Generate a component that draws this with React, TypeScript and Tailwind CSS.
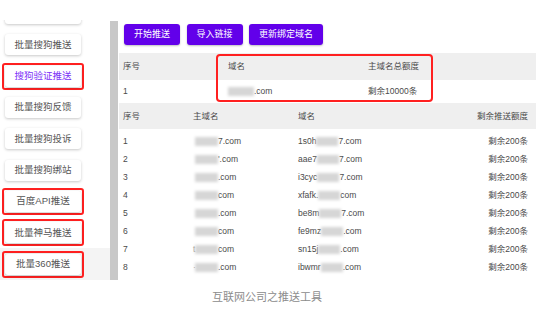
import React from "react"

const font = { fontFamily: '"Liberation Sans", "Noto Sans CJK SC", sans-serif' }

const sideItems = [
  { label: "", partial: true },
  { label: "批量搜狗推送" },
  { label: "搜狗验证推送", marked: true, purple: true },
  { label: "批量搜狗反馈" },
  { label: "批量搜狗投诉" },
  { label: "批量搜狗绑站" },
  { label: "百度API推送", marked: true },
  { label: "批量神马推送", marked: true },
  { label: "批量360推送", marked: true, active: true },
]

const rows = [
  { main: "7.com", mainPre: "", pre: "1s0h", suf: "7.com" },
  { main: "'.com", mainPre: "", pre: "aae7", suf: "7.com" },
  { main: ".com", mainPre: "", pre: "i3cyc", suf: "7.com" },
  { main: "com", mainPre: "", pre: "xfafk.", suf: "com" },
  { main: ".com", mainPre: "", pre: "be8m", suf: "7.com" },
  { main: "com", mainPre: "", pre: "fe9mz", suf: ".com" },
  { main: "com", mainPre: "t", pre: "sn15j", suf: ".com" },
  { main: ".com", mainPre: "·", pre: "ibwmr", suf: ".com" },
]

function Blur({ w }: { w: string }) {
  return <span className={`inline-block h-[9px] ${w} bg-[#d6d6d6] blur-[1.5px] align-middle`} />
}

function SideButton({ label, purple }: { label: string; purple?: boolean }) {
  return (
    <div
      className={`flex h-[21px] w-[76px] items-center justify-center rounded-[3px] bg-white text-[9.5px] shadow-[0_1px_3px_rgba(0,0,0,0.22)] ${
        purple ? "text-[#7b2ff7]" : "text-[#555]"
      }`}
    >
      {label}
    </div>
  )
}

export default function App() {
  return (
    <div className="h-[322px] w-[546px] overflow-hidden bg-white" style={font}>
      <div className="mt-[20px] flex h-[260px]">
        {/* sidebar */}
        <div className="w-[110px] overflow-hidden">
          <div className="-mt-[22px]">
            {sideItems.map((it, i) => (
              <div
                key={i}
                className={`flex h-[31.3px] items-center pl-[5px] ${it.active ? "bg-[#f4f4f4]" : ""}`}
              >
                {it.marked ? (
                  <div className="-ml-[3px] rounded-[3px] border-2 border-[#ff2020] p-[1px]">
                    <SideButton label={it.label} purple={it.purple} />
                  </div>
                ) : (
                  <SideButton label={it.label} />
                )}
              </div>
            ))}
          </div>
        </div>
        <div className="mt-[1px] w-[8px] bg-[#c8c8c8]" />

        {/* main */}
        <div className="flex-1 pl-[1px] pr-[10px]">
          <div className="flex gap-[6.5px] pl-[5px] pt-[4px]">
            {["开始推送", "导入链接", "更新绑定域名"].map((t, i) => (
              <button
                key={t}
                className={`h-[21px] rounded-[3px] bg-[#6200ea] text-[9px] text-white shadow-[0_1px_2px_rgba(0,0,0,0.25)] ${
                  i === 2 ? "w-[74px]" : "w-[56px]"
                }`}
              >
                {t}
              </button>
            ))}
          </div>

          {/* table 1 */}
          <div className="relative mt-[8px] text-[8.5px] text-[#4a4a4a]">
            <div className="grid h-[27px] grid-cols-[105px_140px_1fr] items-center bg-[#efefef] pl-[4px]">
              <span>序号</span>
              <span>域名</span>
              <span>主域名总额度</span>
            </div>
            <div className="grid h-[23px] grid-cols-[105px_140px_1fr] items-center pl-[4px]">
              <span>1</span>
              <span className="flex items-center">
                <Blur w="w-[26px]" />
                <span>.com</span>
              </span>
              <span>剩余10000条</span>
            </div>
            <div className="absolute left-[97px] top-[1px] h-[48px] w-[217px] rounded-[4px] border-2 border-[#ff2020]" />
          </div>

          {/* table 2 */}
          <div className="text-[8.5px] text-[#4a4a4a]">
            <div className="grid h-[26px] grid-cols-[70px_105px_1fr_auto] items-center bg-[#efefef] pl-[4px] pr-[8px]">
              <span>序号</span>
              <span>主域名</span>
              <span>域名</span>
              <span className="text-right">剩余推送额度</span>
            </div>
            <div className="pt-[3px]">
              {rows.map((r, i) => (
                <div
                  key={i}
                  className="grid h-[18px] grid-cols-[70px_105px_1fr_auto] items-center pl-[4px] pr-[8px]"
                >
                  <span>{i + 1}</span>
                  <span className="flex items-center">
                    <span className="w-[2px] text-[#999]">{r.mainPre}</span>
                    <Blur w="w-[23px]" />
                    <span>{r.main}</span>
                  </span>
                  <span className="flex items-center">
                    <span>{r.pre}</span>
                    <Blur w="w-[22px]" />
                    <span>{r.suf}</span>
                  </span>
                  <span className="text-right">剩余200条</span>
                </div>
              ))}
            </div>
          </div>
        </div>
      </div>

      <div className="pr-[12px] pt-[9px] text-center text-[11px] text-[#8c8c8c]">互联网公司之推送工具</div>
    </div>
  )
}
